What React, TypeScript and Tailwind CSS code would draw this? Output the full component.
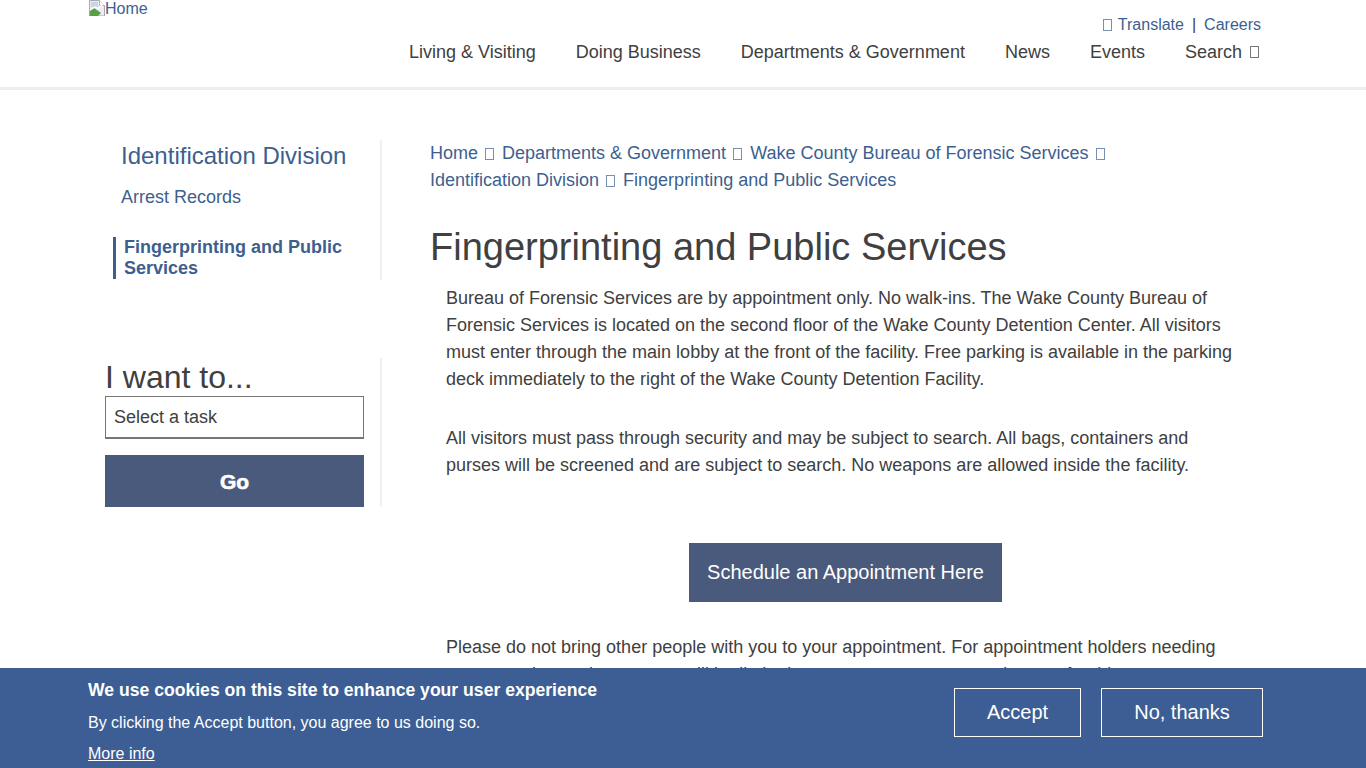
function Tofu({ className = "" }: { className?: string }) {
  return <span className={`inline-block w-[9px] h-[12px] border border-current opacity-70 align-[-1px] ${className}`} />;
}

function BrokenImage() {
  return (
    <svg width="16" height="16" viewBox="0 0 16 16" className="shrink-0">
      <path d="M0.5 0.5h10l5 5v10.5H0.5z" fill="#e9edf2" stroke="#a9a9a9" />
      <path d="M10.5 0.5v5h5" fill="#ffffff" stroke="#b5b5b5" />
      <path d="M2 2h7v5H2z" fill="#c4d5ec" />
      <path d="M1 16V11l4-3 3 2 4 3-3 3z" fill="#5c9e46" />
      <path d="M1 10l5-3 3 2 6-6" fill="none" stroke="#ffffff" strokeWidth="1.2" />
    </svg>
  );
}

const nav = ["Living & Visiting", "Doing Business", "Departments & Government", "News", "Events"];

function Header() {
  return (
    <header className="h-[90px] border-b-[3px] border-[#eeeeee] pl-[89px] pr-[105px] flex justify-between">
      <a className="flex items-start h-4 text-[#3d5f8f] text-[16px] leading-[18px]">
        <BrokenImage />
        <span>Home</span>
      </a>
      <div className="flex flex-col items-end pt-4">
        <div className="flex items-center text-[16px] leading-[18px] text-[#3d5f8f]">
          <Tofu className="mr-[6px] w-[8px] h-[11px]" />
          <span>Translate</span>
          <span className="mx-2 text-[#404040]">|</span>
          <span>Careers</span>
        </div>
        <nav className="flex gap-10 mt-[6px] text-[18px] leading-[24px] text-[#404040]">
          {nav.map((n) => (
            <span key={n}>{n}</span>
          ))}
          <span className="flex items-center gap-[8px] pr-[2px]">
            Search <Tofu />
          </span>
        </nav>
      </div>
    </header>
  );
}

function Sidebar() {
  return (
    <aside className="w-[277px] shrink-0">
      <div className="border-r-2 border-[#f0f0f0] h-[140px] pl-2">
        <div className="pl-2 text-[24px] leading-[32px] text-[#3d5f8f]">
          Identification Division
        </div>
        <div className="pl-2 mt-[13px] text-[18px] leading-[24px] text-[#3d5f8f]">Arrest Records</div>
        <div className="mt-[28px] w-[233px] border-l-[3px] border-[#3d5f8f] pl-2 text-[18px] leading-[21px] font-bold text-[#3d5f8f]">
          Fingerprinting and Public Services
        </div>
      </div>
      <div className="mt-[78px] h-[149px] border-r-2 border-[#f0f0f0]">
        <h2 className="text-[32px] leading-[38px] text-[#404040]">I want to...</h2>
        <div className="w-[259px] h-[43px] border border-[#767676] border-b-2 px-2 flex items-center text-[18px] text-[#404040]">
          Select a task
        </div>
        <button className="mt-4 w-[259px] h-[52px] bg-[#4a5a7c] text-white text-[21px] leading-none font-bold [-webkit-text-stroke:0.6px_white]">
          Go
        </button>
      </div>
    </aside>
  );
}

function Main() {
  return (
    <main className="flex-1 ml-[48px] min-w-0 text-[18px] leading-[27px] text-[#404040]">
      <div className="text-[#3d5f8f]">
        <div className="flex items-center gap-2">
          <span>Home</span>
          <Tofu className="-ml-[1px]" />
          <span>Departments &amp; Government</span>
          <Tofu className="-ml-[1px]" />
          <span>Wake County Bureau of Forensic Services</span>
          <Tofu className="-ml-[1px]" />
        </div>
        <div className="flex items-center gap-2">
          <span>Identification Division</span>
          <Tofu className="-ml-[1px]" />
          <span>Fingerprinting and Public Services</span>
        </div>
      </div>
      <h1 className="mt-[30px] text-[38px] leading-[46px]">Fingerprinting and Public Services</h1>
      <div className="px-4 mt-[15px]">
        <p>
          Bureau of Forensic Services are by appointment only. No walk-ins. The Wake County Bureau of Forensic
          Services is located on the second floor of the Wake County Detention Center. All visitors must enter through
          the main lobby at the front of the facility. Free parking is available in the parking deck immediately to
          the right of the Wake County Detention Facility.
        </p>
        <p className="mt-8">
          All visitors must pass through security and may be subject to search. All bags, containers and purses will
          be screened and are subject to search. No weapons are allowed inside the facility.
        </p>
        <div className="flex justify-center mt-[64px]">
          <a className="h-[59px] w-[313px] flex items-center justify-center bg-[#4a5a7c] text-white text-[20px]">
            Schedule an Appointment Here
          </a>
        </div>
        <p className="mt-8">
          Please do not bring other people with you to your appointment. For appointment holders needing
          transportation assistance, we will be limited to one person accompanying you for this.
        </p>
      </div>
    </main>
  );
}

function CookieBar() {
  return (
    <div className="fixed inset-x-0 bottom-0 h-[100px] bg-[#3c5e94] text-white pl-[88px] pr-[103px] flex justify-between">
      <div>
        <h2 className="mt-3 text-[17.6px] leading-[21px] font-bold">We use cookies on this site to enhance your user experience</h2>
        <p className="mt-3 text-[16px] leading-[20px]">By clicking the Accept button, you agree to us doing so.</p>
        <a className="block mt-[11px] text-[16px] leading-[20px] underline">More info</a>
      </div>
      <div className="flex gap-5 mt-5 items-start">
        <button className="w-[127px] h-[49px] pb-[2px] border border-white text-[20px]">Accept</button>
        <button className="w-[162px] h-[49px] pb-[2px] border border-white text-[20px]">No, thanks</button>
      </div>
    </div>
  );
}

export default function App() {
  return (
    <div className="h-screen overflow-hidden bg-white [font-family:'Liberation_Sans',Arial,sans-serif]">
      <Header />
      <div className="flex px-[105px] pt-[50px]">
        <Sidebar />
        <Main />
      </div>
      <CookieBar />
    </div>
  );
}
